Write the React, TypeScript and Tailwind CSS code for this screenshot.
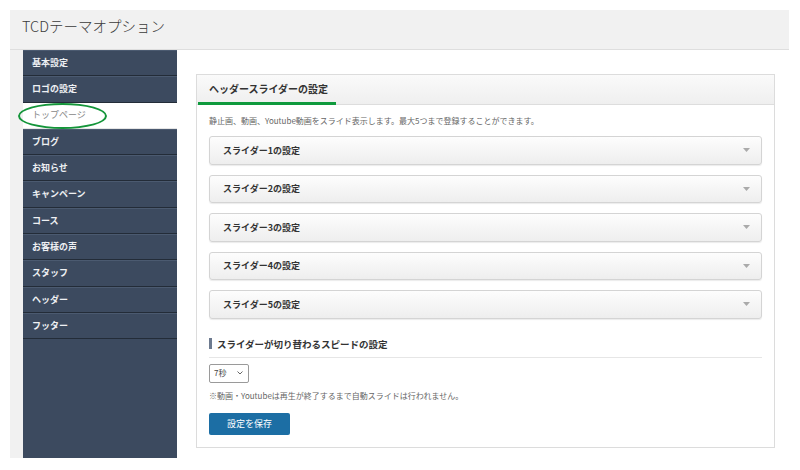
import React from 'react';

const menuItems = [
  '基本設定',
  'ロゴの設定',
  'トップページ',
  'ブログ',
  'お知らせ',
  'キャンペーン',
  'コース',
  'お客様の声',
  'スタッフ',
  'ヘッダー',
  'フッター',
];

const sliders = [1, 2, 3, 4, 5];

const jp = { fontFamily: '"Noto Sans CJK JP", "Noto Sans", "Liberation Sans", sans-serif' };

export default function App() {
  return (
    <div className="relative w-[800px] h-[470px] bg-white pt-[10px] pl-[10px] text-[#333]" style={jp}>
      <div className="w-[779px] h-[448px] bg-[#f1f1f1] flex flex-col">
        {/* Title */}
        <div className="h-[40px] shrink-0 border-b border-[#dedede] px-[12px] pt-[6px]">
          <h1 className="text-[14.5px] leading-[20px] text-[#3a3a3a] font-light">TCDテーマオプション</h1>
        </div>

        <div className="flex flex-1 pl-[13px]">
          {/* Sidebar */}
          <div className="w-[154px] bg-[#3c4a5f] flex flex-col">
            {menuItems.map((item, i) => {
              const active = i === 2;
              return (
                <div
                  key={item}
                  className={`h-[26.3px] flex items-center pl-[9px] text-[9px] border-b ${
                    active
                      ? 'bg-white text-[#888] font-normal border-[#e5e5e5]'
                      : 'text-[#eef0f3] font-bold border-[#232c38] shadow-[inset_0_1px_0_#4b5a70]'
                  }`}
                >
                  {item}
                </div>
              );
            })}
          </div>

          {/* Content */}
          <div className="flex-1 bg-white pl-[19px] pr-[14px] pt-[24px]">
            <div className="h-[374px] border border-[#dcdcdc] bg-white">
              {/* Panel header */}
              <div className="relative h-[30px] border-b border-[#dddddd] bg-gradient-to-b from-[#fafafa] to-[#efefef] flex items-center pl-[12px]">
                <h2 className="text-[10px] font-bold text-[#333] leading-none -mt-[2px]">ヘッダースライダーの設定</h2>
                <div className="absolute left-[1px] bottom-[-1px] w-[138px] h-[3px] bg-[#0f9a3d]" />
              </div>

              <div className="px-[12px]">
                <p className="mt-[11px] text-[8px] leading-[10px] text-[#666]">
                  静止画、動画、Youtube動画をスライド表示します。最大5つまで登録することができます。
                </p>

                <div className="mt-[10px] flex flex-col gap-[10px]">
                  {sliders.map((n) => (
                    <div
                      key={n}
                      className="h-[28.5px] rounded-[3px] border border-[#d4d4d4] bg-gradient-to-b from-[#fdfdfd] to-[#eeeeee] shadow-[0_1px_1px_rgba(0,0,0,0.08)] flex items-center justify-between pl-[13px] pr-[11px]"
                    >
                      <span className="text-[9px] font-bold text-[#333]">スライダー{n}の設定</span>
                      <svg width="7" height="4" viewBox="0 0 7 4">
                        <path d="M0 0 L7 0 L3.5 4 Z" fill="#aaaaaa" />
                      </svg>
                    </div>
                  ))}
                </div>

                {/* Speed setting */}
                <div className="mt-[18px] pb-[6px] border-b border-[#e6e6e6] flex items-center">
                  <div className="w-[3px] h-[11px] bg-[#6d7a8f] mr-[5px]" />
                  <h3 className="text-[9.5px] font-bold text-[#333] leading-[14px]">スライダーが切り替わるスピードの設定</h3>
                </div>

                <div className="mt-[6px] w-[40px] h-[19px] border border-[#9a9a9a] rounded-[2px] flex items-center justify-between pl-[4px] pr-[5px] bg-white">
                  <span className="text-[8px] text-[#444]">7秒</span>
                  <svg width="6" height="4" viewBox="0 0 6 4">
                    <path d="M0.5 0.5 L3 3 L5.5 0.5" fill="none" stroke="#666" strokeWidth="1" />
                  </svg>
                </div>

                <p className="mt-[8px] text-[8px] leading-[10px] text-[#666]">
                  ※動画・Youtubeは再生が終了するまで自動スライドは行われません。
                </p>

                <button className="mt-[12px] w-[81px] h-[22px] rounded-[2px] bg-[#1c6ea4] text-white text-[9px] flex items-center justify-center">
                  設定を保存
                </button>
              </div>
            </div>
          </div>
        </div>
      </div>

      {/* highlight annotation */}
      <div className="absolute left-[18px] top-[103px] w-[89px] h-[26px] rounded-[50%] border-2 border-[#14953a] pointer-events-none" />
    </div>
  );
}
